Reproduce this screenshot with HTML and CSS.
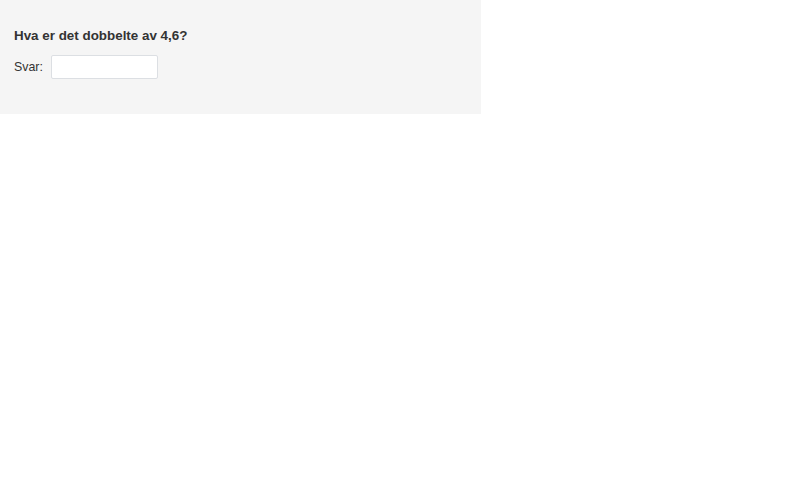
FILE: index.html
```html
<!DOCTYPE html>
<html lang="no">
<head>
   <meta charset="UTF-8">
   <title>Oppgave</title>
   <link rel="stylesheet" href="styles.css">
</head>
<body>
   <div class="task">
      <p class="question">Hva er det dobbelte av 4,6?</p>
      <div class="answer-row">
         <label for="svar">Svar:</label>
         <input id="svar" type="text">
      </div>
   </div>
</body>
</html>
```

FILE: styles.css
```css
body {
   margin: 0;
   background: #ffffff;
   font-family: "Liberation Sans", Arial, sans-serif;
   font-size: 12px;
   color: #333333;
}

.task {
   width: 481px;
   height: 114px;
   box-sizing: border-box;
   padding: 26px 14px 0;
   background: #f5f5f5;
}

.question {
   margin: 0;
   font-size: 13.4px;
   font-weight: bold;
   line-height: 20px;
}

.answer-row {
   display: flex;
   align-items: center;
   gap: 8px;
   margin-top: 9px;
}

.answer-row label {
   font-size: 12.4px;
}

.answer-row input {
   width: 107px;
   height: 24px;
   box-sizing: border-box;
   margin: 0;
   border: 1px solid #dcdfe3;
   border-radius: 2px;
   background: #ffffff;
   font: inherit;
   padding: 0 4px;
}
```
